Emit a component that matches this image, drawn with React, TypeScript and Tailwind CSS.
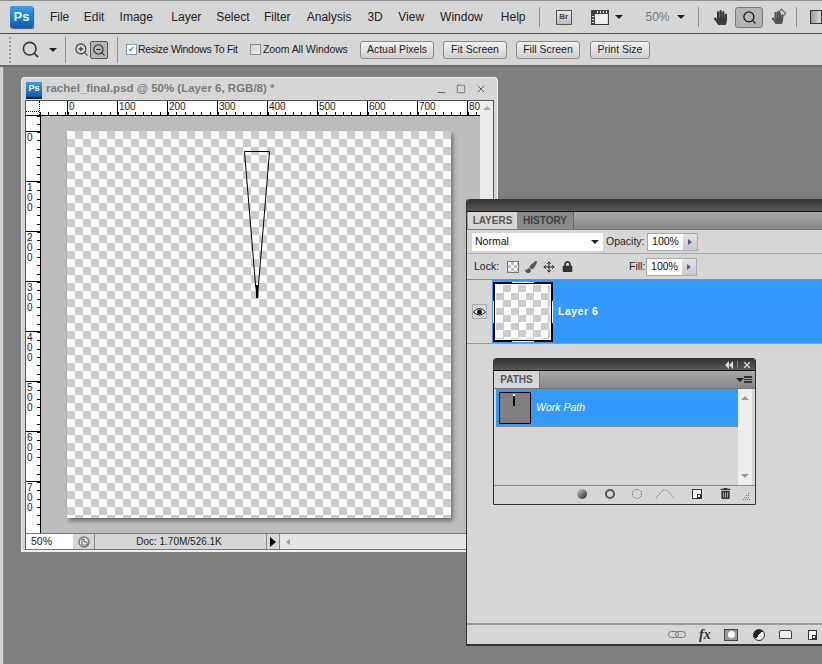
import { Search, ZoomIn, ZoomOut, Move, X, Minus, Square } from "lucide-react";
import { FaHandPaper, FaLock, FaPaintBrush, FaTrashAlt } from "react-icons/fa";

const check =
  "bg-[repeating-conic-gradient(#cccccc_0_25%,#ffffff_0_50%)] bg-[length:16px_16px]";

function Caret({ className = "" }: { className?: string }) {
  return (
    <span
      className={`block h-0 w-0 border-x-[4px] border-t-[4px] border-x-transparent border-t-[#222] ${className}`}
    />
  );
}

function Sep({ className = "" }: { className?: string }) {
  return <span className={`block w-px bg-[#8f8f8f] ${className}`} />;
}

function OptButton({ label, width, ml }: { label: string; width: string; ml: string }) {
  return (
    <button
      className={`${width} ${ml} flex h-[18px] items-center justify-center rounded-[3px] border border-[#8a8a8a] bg-gradient-to-b from-[#f2f2f2] to-[#cfcfcf] text-[10.5px] text-[#222]`}
    >
      {label}
    </button>
  );
}

function MenuBar() {
  return (
    <div className="flex h-[34px] items-center border-y border-t-[#8c8c8c] border-b-[#4a4a4a] bg-[#d6d6d6] text-[12px] text-[#222]">
      <div className="ml-[10px] flex h-[22px] w-[23px] items-center justify-center rounded-[2px] bg-gradient-to-b from-[#3aa0e8] to-[#0a5cae] text-[13px] font-bold text-[#e8f4ff] shadow-[1px_1px_1px_#555]">
        Ps
      </div>
      <span className="ml-[17px] w-[34px]">File</span>
      <span className="w-[36px]">Edit</span>
      <span className="w-[52px]">Image</span>
      <span className="w-[45px]">Layer</span>
      <span className="w-[48px]">Select</span>
      <span className="w-[43px]">Filter</span>
      <span className="w-[61px]">Analysis</span>
      <span className="w-[31px]">3D</span>
      <span className="w-[42px]">View</span>
      <span className="w-[61px]">Window</span>
      <span className="w-[38px]">Help</span>
      <Sep className="h-[20px]" />
      <span className="ml-[16px] flex h-[15px] w-[16px] items-center justify-center border border-[#555] bg-gradient-to-b from-[#e8e8e8] to-[#bdbdbd] text-[8px] font-bold text-[#444]">
        Br
      </span>
      <svg className="ml-[19px] h-[15px] w-[18px]" viewBox="0 0 18 15">
        <rect x="0.5" y="0.5" width="17" height="14" fill="#f0f0f0" stroke="#333" />
        <rect x="0" y="0" width="18" height="4" fill="#444" />
        <rect x="0" y="0" width="4" height="15" fill="#444" />
        <path d="M6 1h1v2H6zM9 1h1v2H9zM12 1h1v2h-1zM15 1h1v2h-1zM1 6h2v1H1zM1 9h2v1H1zM1 12h2v1H1z" fill="#eee" />
      </svg>
      <Caret className="ml-[6px]" />
      <span className="ml-[23px] w-[30px] text-[12px] text-[#777]">50%</span>
      <Caret className="ml-[2px]" />
      <Sep className="ml-[13px] h-[20px]" />
      <FaHandPaper className="ml-[14px] text-[15px] text-[#3a3a3a]" />
      <span className="ml-[7px] flex h-[21px] w-[28px] items-center justify-center rounded-[3px] border border-[#777] bg-[#b5b5b5]">
        <Search size={15} strokeWidth={2} color="#111" />
      </span>
      <span className="relative ml-[5px] flex w-[18px] items-center justify-center">
        <FaHandPaper className="text-[13px] text-[#555]" />
        <span className="absolute right-[1px] top-[-1px] h-[7px] w-[7px] rotate-45 border border-[#555]" />
      </span>
      <Sep className="ml-[10px] h-[20px]" />
      <span className="ml-[13px] h-[14px] w-[12px] border border-[#333] bg-gradient-to-r from-[#999] to-[#ddd]" />
    </div>
  );
}

function OptionsBar() {
  return (
    <div className="flex h-[33px] items-center whitespace-nowrap border-b-2 border-[#6a6a6a] bg-[#d6d6d6] text-[10.5px] text-[#222]">
      <span className="ml-[9px] h-[26px] w-[2px] border-l-2 border-dotted border-[#999]" />
      <Search className="ml-[10px]" size={19} strokeWidth={2} color="#333" />
      <Caret className="ml-[9px] border-x-[3px] border-t-[3px]" />
      <Sep className="ml-[8px] h-[26px]" />
      <ZoomIn className="ml-[8px]" size={15} strokeWidth={1.75} color="#333" />
      <span className="ml-[1px] flex h-[18px] w-[18px] items-center justify-center rounded-[2px] border border-[#555] bg-[#b5b5b5]">
        <ZoomOut size={14} strokeWidth={1.75} color="#222" />
      </span>
      <Sep className="ml-[9px] h-[26px]" />
      <span className="ml-[8px] flex h-[11px] w-[11px] items-center justify-center border border-[#7f9db9] bg-white text-[9px] leading-none text-[#2a3f9c]">
        ✓
      </span>
      <span className="ml-[1px] w-[112px] tracking-[-0.3px]">Resize Windows To Fit</span>
      <span className="h-[11px] w-[11px] border border-[#8a8a8a] bg-gradient-to-br from-[#cfcfcf] to-[#f2f2f2]" />
      <span className="ml-[2px] w-[97px] tracking-[-0.1px]">Zoom All Windows</span>
      <OptButton label="Actual Pixels" width="w-[74px]" ml="" />
      <OptButton label="Fit Screen" width="w-[64px]" ml="ml-[9px]" />
      <OptButton label="Fill Screen" width="w-[64px]" ml="ml-[9px]" />
      <OptButton label="Print Size" width="w-[60px]" ml="ml-[10px]" />
    </div>
  );
}

const hMarks = ["0", "100", "200", "300", "400", "500", "600", "700", "80"];
const vMarks = [["0"], ["1", "0", "0"], ["2", "0", "0"], ["3", "0", "0"], ["4", "0", "0"], ["5", "0", "0"], ["6", "0", "0"], ["7", "0", "0"]];

function DocWindow() {
  return (
    <div className="absolute left-[21px] top-[77px] flex h-[475px] w-[477px] flex-col rounded-t-[4px] border-x border-b-2 border-t border-[#eeeeee] bg-[#d6d6d6] px-[3px]">
      <div className="flex h-[22px] shrink-0 items-center">
        <div className="ml-[1px] flex h-[15px] w-[16px] items-center justify-center bg-gradient-to-b from-[#3aa0e8] to-[#0a5cae] text-[9px] font-bold text-white shadow-[0_2px_0_#222]">
          Ps
        </div>
        <span className="ml-[4px] text-[11.5px] font-bold text-[#7a7a7a]">
          rachel_final.psd @ 50% (Layer 6, RGB/8) *
        </span>
        <span className="ml-auto mr-[7px] flex items-center gap-[9px] text-[#666]">
          <Minus size={11} strokeWidth={2.5} className="translate-y-[3px]" />
          <Square size={10} strokeWidth={2} />
          <X size={12} strokeWidth={2} />
        </span>
      </div>
      <div className="flex min-h-0 flex-1 border border-b-0 border-[#555]">
        <div className="flex min-w-0 flex-1 flex-col">
          <div className="flex h-[15px] shrink-0 border-b border-black bg-white">
            <div className="relative h-full w-[14px] shrink-0 border-r border-dotted border-black">
              <span className="absolute bottom-[3px] left-0 w-full border-t border-dotted border-black" />
            </div>
            <span className="w-[27px] shrink-0 bg-[repeating-linear-gradient(90deg,#000_0_1px,transparent_1px_8.33px)] bg-[length:100%_3px] bg-bottom bg-no-repeat" />
            <div className="flex overflow-hidden">
              {hMarks.map((m) => (
                <div
                  key={m}
                  className="h-full w-[50px] shrink-0 border-l border-black bg-[repeating-linear-gradient(90deg,#000_0_1px,transparent_1px_8.33px)] bg-[length:100%_3px] bg-bottom bg-no-repeat pl-[1px] text-[10px] leading-[11px] text-[#222]"
                >
                  {m}
                </div>
              ))}
            </div>
          </div>
          <div className="flex min-h-0 flex-1">
            <div className="flex w-[15px] shrink-0 flex-col overflow-hidden border-r border-black bg-white">
              <div className="h-[15px] shrink-0 bg-[repeating-linear-gradient(180deg,#000_0_1px,transparent_1px_8.33px)] bg-[length:3px_100%] bg-right bg-no-repeat" />
              {vMarks.map((m, i) => (
                <div
                  key={i}
                  className="flex h-[50px] shrink-0 flex-col border-t border-black bg-[repeating-linear-gradient(180deg,#000_0_1px,transparent_1px_8.33px)] bg-[length:3px_100%] bg-right bg-no-repeat pl-[1px] pt-[1px] text-[10px] leading-[10px] text-[#222]"
                >
                  {m.map((d, j) => (
                    <span key={j}>{d}</span>
                  ))}
                </div>
              ))}
            </div>
            <div className="min-w-0 flex-1 bg-[#bdbdbd] pl-[26px] pt-[15px]">
              <div className={`relative h-[387px] w-[384px] shadow-[2px_3px_4px_#6e6e6e] ${check}`}>
                <svg className="absolute left-[177px] top-[20px] h-[150px] w-[27px]" viewBox="0 0 27 150">
                  <path d="M0.5 0.5H25.5L14.5 134L13.5 147L11.5 134Z" fill="none" stroke="#000" />
                  <path d="M13 134V147" stroke="#000" strokeWidth="2" />
                </svg>
              </div>
            </div>
          </div>
          <div className="flex h-[17px] shrink-0 items-center border-y border-[#777] bg-[#d6d6d6] text-[10.5px] text-[#222]">
            <span className="flex h-full w-[47px] items-center bg-white pl-[5px]">50%</span>
            <span className="flex h-full w-[22px] items-center justify-center border-r border-[#888]">
              <svg className="h-[12px] w-[12px]" viewBox="0 0 12 12">
                <circle cx="6" cy="6" r="5" fill="#eee" stroke="#777" strokeWidth="1.5" />
                <path d="M6 3V6H9V9H4V3Z" fill="#fff" stroke="#333" strokeWidth="0.75" />
              </svg>
            </span>
            <span className="w-[171px] pr-[3px] text-center text-[10px]">Doc: 1.70M/526.1K</span>
            <span className="flex h-full w-[14px] items-center justify-center border-x border-[#888]">
              <span className="h-0 w-0 border-y-[5px] border-l-[6px] border-y-transparent border-l-black" />
            </span>
            <span className="flex h-full flex-1 items-center bg-[#e6e6e6] pl-[6px]">
              <span className="h-0 w-0 border-y-[3px] border-r-[4px] border-y-transparent border-r-[#999]" />
            </span>
          </div>
        </div>
        <div className="flex w-[13px] shrink-0 justify-center bg-[#ececec] pt-[5px]">
          <span className="h-0 w-0 border-x-[4px] border-b-[4px] border-x-transparent border-b-[#aaa]" />
        </div>
      </div>
    </div>
  );
}

function NumberBox({ value }: { value: string }) {
  return (
    <div className="flex h-[18px] w-[51px] border border-[#aaa] text-[10.5px] text-[#111]">
      <span className="flex w-[35px] items-center justify-center bg-white">{value}</span>
      <span className="flex flex-1 items-center justify-center bg-gradient-to-b from-[#e4e4e4] to-[#c8c8c8]">
        <span className="h-0 w-0 border-y-[3px] border-l-[4px] border-y-transparent border-l-[#4a5fa8]" />
      </span>
    </div>
  );
}

function PathsPanel() {
  return (
    <div className="absolute left-[26px] top-[159px] flex h-[147px] w-[263px] flex-col overflow-hidden rounded-t-[3px] border border-[#333] bg-[#d6d6d6]">
      <div className="flex h-[12px] shrink-0 items-center justify-end gap-[3px] border-b border-[#111] bg-gradient-to-b from-[#333] to-[#5a5a5a] pr-[3px] text-[#ddd]">
        <span className="flex">
          <span className="h-0 w-0 border-y-[4px] border-r-[4px] border-y-transparent border-r-[#ddd]" />
          <span className="h-0 w-0 border-y-[4px] border-r-[4px] border-y-transparent border-r-[#ddd]" />
        </span>
        <span className="mx-[1px] h-[7px] w-px bg-[#888]" />
        <X size={10} strokeWidth={3} />
      </div>
      <div className="flex h-[18px] shrink-0 items-end border-b border-[#777] bg-gradient-to-b from-[#a8a8a8] to-[#868686]">
        <span className="flex h-[17px] w-[46px] items-center justify-center border-r border-[#777] bg-[#d6d6d6] text-[10px] font-bold text-[#555]">
          PATHS
        </span>
        <span className="ml-auto mr-[3px] flex items-center self-center">
          <Caret className="border-x-[3px] border-t-[3px]" />
          <span className="h-[7px] w-[8px] border-y border-[#333] bg-[repeating-linear-gradient(180deg,#333_0_1px,transparent_1px_2px)]" />
        </span>
      </div>
      <div className="flex h-[97px] shrink-0 border-b border-[#888] pl-[2px] pr-[3px]">
        <div className="min-w-0 flex-1">
          <div className="flex h-[38px] items-center border-b border-[#8a8a8a] bg-[#3399ff] pl-[3px] text-[10.5px] italic text-white">
            <div className="relative h-[32px] w-[32px] border border-black bg-[#7f7f7f]">
              <span className="absolute left-[13px] top-[1px] h-[2px] w-[2px] bg-white" />
              <span className="absolute left-[13px] top-[3px] h-[10px] w-[2px] bg-black" />
            </div>
            <span className="ml-[5px]">Work Path</span>
          </div>
        </div>
        <div className="flex w-[14px] shrink-0 flex-col items-center justify-between bg-[#eeeeee] py-[7px]">
          <span className="h-0 w-0 border-x-[4px] border-b-[4px] border-x-transparent border-b-[#999]" />
          <span className="h-0 w-0 border-x-[4px] border-t-[4px] border-x-transparent border-t-[#999]" />
        </div>
      </div>
      <div className="flex flex-1 items-center pb-[3px] pl-[83px]">
        <span className="h-[10px] w-[10px] rounded-full bg-gradient-to-br from-[#ddd] to-[#222]" />
        <span className="ml-[18px] h-[10px] w-[10px] rounded-full border-2 border-[#555]" />
        <span className="ml-[17px] h-[10px] w-[10px] rounded-full border border-dotted border-[#555]" />
        <svg className="ml-[13px] h-[10px] w-[20px]" viewBox="0 0 20 10">
          <path d="M1 9L6 3Q10 -1 14 3L19 9" fill="none" stroke="#777" strokeDasharray="1.5 1" />
        </svg>
        <span className="relative ml-[17px] h-[10px] w-[10px] border border-[#333] bg-white">
          <span className="absolute bottom-0 right-0 h-[4px] w-[4px] border border-[#333]" />
        </span>
        <FaTrashAlt className="ml-[18px] text-[11px] text-[#333]" />
        <svg className="ml-[12px] h-[7px] w-[7px] translate-y-[3px]" viewBox="0 0 7 7">
          <path d="M5 0h1v1H5zM3 2h1v1H3zM5 2h1v1H5zM1 4h1v1H1zM3 4h1v1H3zM5 4h1v1H5zM0 6h1v1H0zM2 6h1v1H2zM4 6h1v1H4zM6 6h1v1H6z" fill="#777" />
        </svg>
      </div>
    </div>
  );
}

function LayersPanel() {
  return (
    <div className="absolute left-[466px] top-[199px] flex h-[447px] w-[356px] flex-col rounded-tl-[3px] border-b-2 border-l border-[#333] bg-[#d6d6d6] text-[10.5px] text-[#222]">
      <div className="h-[13px] shrink-0 rounded-tl-[3px] border-b border-[#111] bg-gradient-to-b from-[#333] to-[#5a5a5a]" />
      <div className="flex h-[18px] shrink-0 items-end border-b border-[#777] bg-gradient-to-b from-[#a8a8a8] to-[#868686] text-[10px] font-bold">
        <span className="ml-[1px] flex h-[17px] w-[49px] items-center justify-center bg-[#d6d6d6] text-[#555]">LAYERS</span>
        <span className="flex h-[17px] w-[57px] items-center justify-center border-r border-[#666] bg-[#8a8a8a] text-[#3f3f3f]">HISTORY</span>
      </div>
      <div className="flex h-[24px] shrink-0 items-center border-b border-[#aaa] pl-[5px]">
        <div className="flex h-[18px] w-[131px] items-center justify-between bg-white pl-[3px] pr-[4px] text-[#111]">
          Normal
          <Caret />
        </div>
        <span className="ml-[3px] w-[41px]">Opacity:</span>
        <NumberBox value="100%" />
      </div>
      <div className="flex h-[26px] shrink-0 items-center border-b border-[#888] pl-[7px]">
        <span className="w-[26px]">Lock:</span>
        <span className="ml-[7px] h-[12px] w-[12px] border border-[#777] bg-[repeating-conic-gradient(#bbb_0_25%,#fff_0_50%)] bg-[length:6px_6px]" />
        <FaPaintBrush className="ml-[6px] text-[12px] text-[#555]" />
        <Move className="ml-[6px]" size={12} strokeWidth={2} color="#222" />
        <FaLock className="ml-[7px] text-[11px] text-[#333]" />
        <span className="ml-[56px] w-[16px]">Fill:</span>
        <span className="ml-[1px]">
          <NumberBox value="100%" />
        </span>
      </div>
      <div className="relative flex h-[64px] shrink-0 border-b border-[#999]">
        <div className="flex w-[25px] items-center justify-center">
          <span className="flex h-[15px] w-[15px] items-center justify-center border border-[#aaa]">
            <svg className="h-[10px] w-[13px]" viewBox="0 0 13 10">
              <path d="M0.5 5Q6.5 -2 12.5 5Q6.5 11 0.5 5Z" fill="#eee" stroke="#111" />
              <circle cx="6.5" cy="5" r="2.5" fill="#111" />
            </svg>
          </span>
        </div>
        <div className="flex flex-1 items-center bg-[#3399ff] pl-[1px] font-bold tracking-[0.5px] text-white">
          <div className="relative h-[60px] w-[60px] border border-white">
            <div className="h-full w-full border border-black bg-white p-px">
              <div className="h-full w-full bg-[repeating-conic-gradient(#cccccc_0_25%,#ffffff_0_50%)] bg-[length:15px_15px]" />
            </div>
            <span className="absolute -left-px -top-px h-[19px] w-[19px] border-l-2 border-t-2 border-black" />
            <span className="absolute -right-px -top-px h-[19px] w-[19px] border-r-2 border-t-2 border-black" />
            <span className="absolute -bottom-px -left-px h-[19px] w-[19px] border-b-2 border-l-2 border-black" />
            <span className="absolute -bottom-px -right-px h-[19px] w-[19px] border-b-2 border-r-2 border-black" />
          </div>
          <span className="ml-[5px]">Layer 6</span>
        </div>
      </div>
      <div className="flex-1" />
      <div className="flex h-[21px] shrink-0 items-center border-t-2 border-[#999] pl-[201px]">
        <svg className="h-[7px] w-[18px]" viewBox="0 0 18 7">
          <rect x="0.5" y="0.5" width="10" height="6" rx="3" fill="none" stroke="#777" />
          <rect x="7.5" y="0.5" width="10" height="6" rx="3" fill="none" stroke="#777" />
        </svg>
        <span className="ml-[13px] w-[21px] font-['Liberation_Serif',serif] text-[14px] font-bold italic text-[#333]">fx</span>
        <span className="ml-[4px] flex h-[12px] w-[14px] items-center justify-center border border-[#444] bg-[#999]">
          <span className="h-[7px] w-[7px] rounded-full bg-white" />
        </span>
        <span className="ml-[15px] h-[12px] w-[12px] rounded-full border border-[#333] bg-[linear-gradient(135deg,#222_50%,#eee_50%)]" />
        <span className="ml-[14px] h-[9px] w-[13px] rounded-t-[2px] border border-[#444] bg-[#eee]" />
        <span className="relative ml-[16px] h-[10px] w-[9px] border border-[#333] bg-white">
          <span className="absolute bottom-0 right-0 h-[4px] w-[4px] border border-[#333]" />
        </span>
      </div>
      <PathsPanel />
    </div>
  );
}

export default function App() {
  return (
    <div className="relative h-[664px] w-[822px] overflow-hidden bg-[#7f7f7f] [font-family:'Liberation_Sans',sans-serif]">
      <MenuBar />
      <OptionsBar />
      <div className="absolute bottom-0 left-0 top-[67px] w-[4px] border-r border-[#8c8c8c] bg-[#cfcfcf]" />
      <DocWindow />
      <LayersPanel />
    </div>
  );
}
